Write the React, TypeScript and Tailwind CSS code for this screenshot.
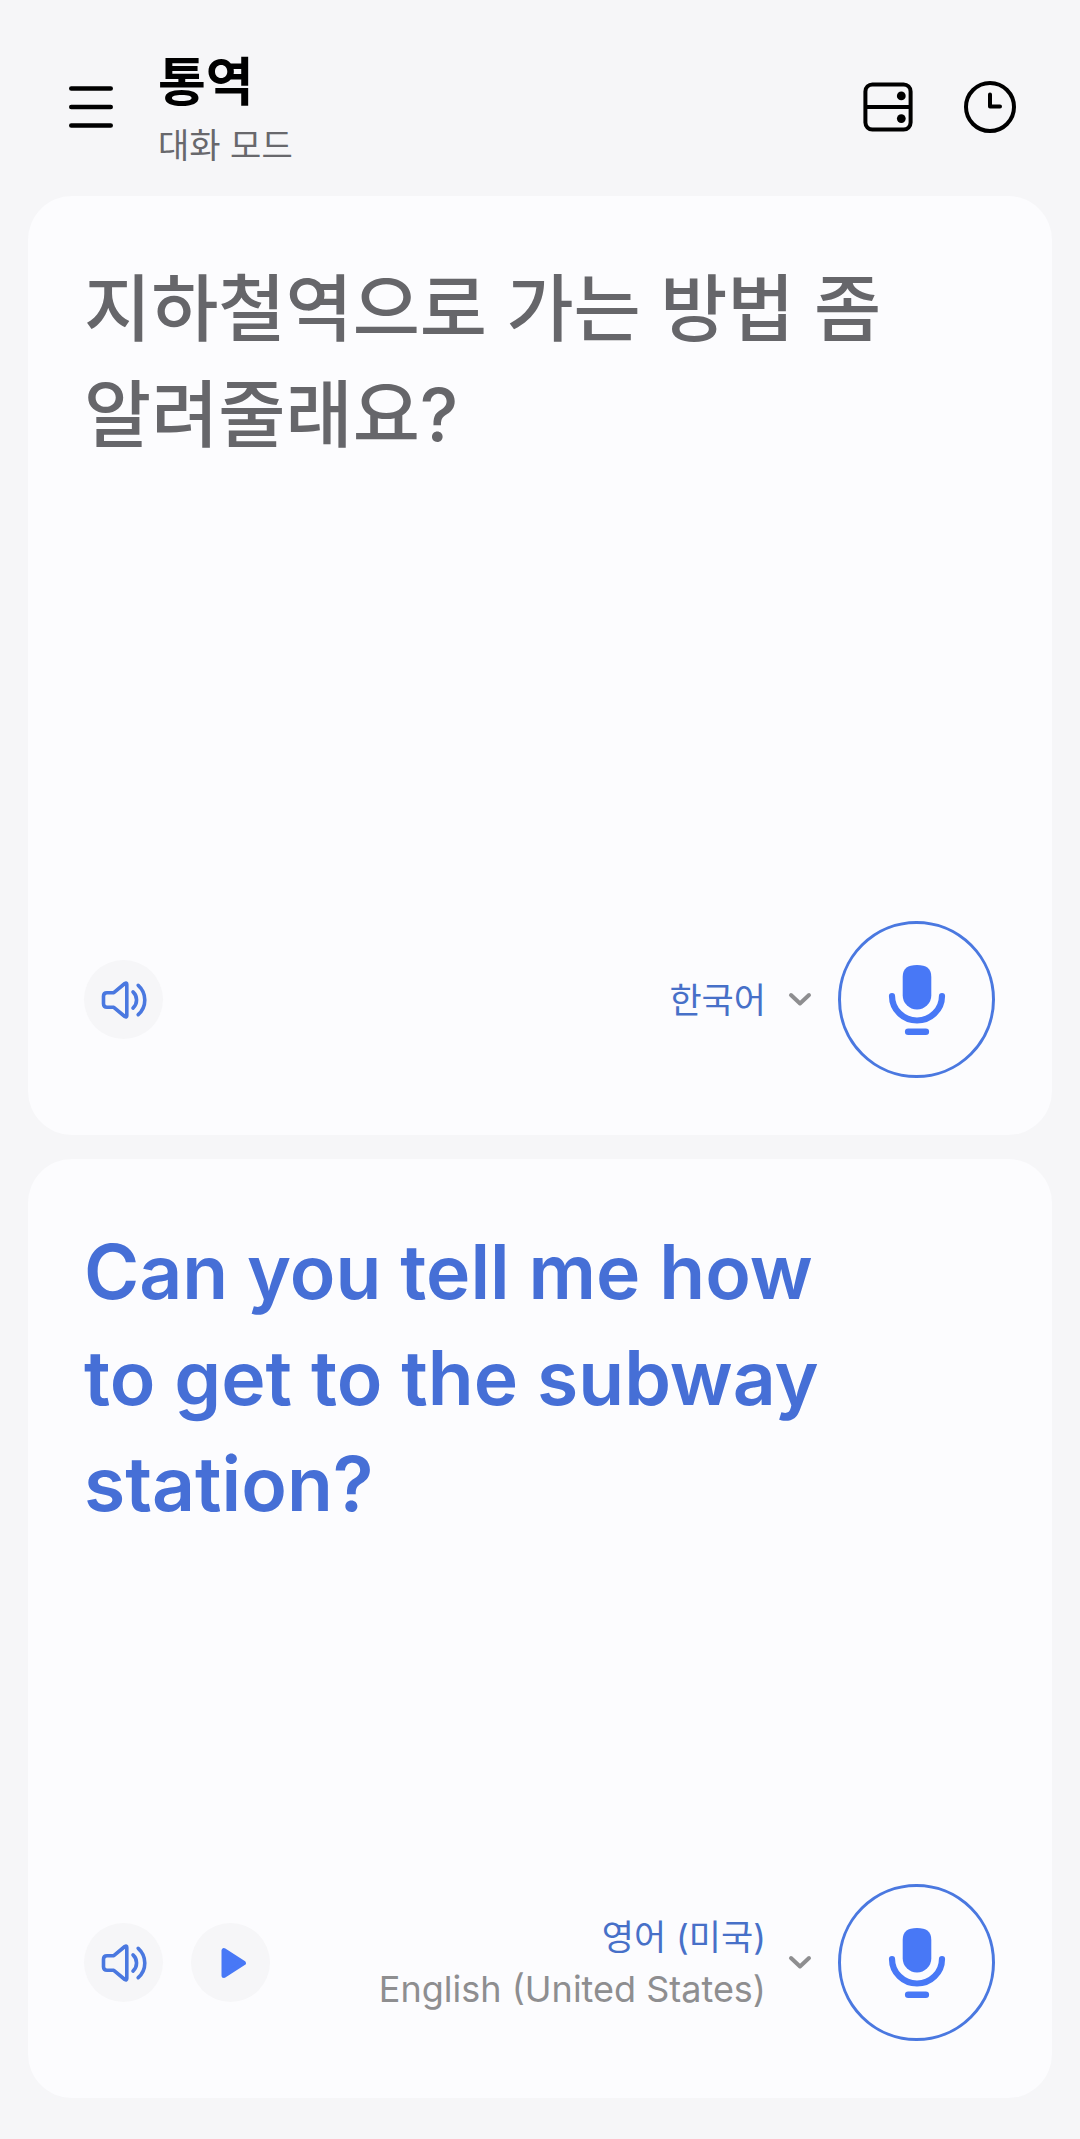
import type { ReactNode } from "react";

const BLUE = "#4878f6";
const BLUE_LINE = "#4a78e0";

function MenuIcon() {
  return (
    <svg width="48" height="48" viewBox="0 0 48 48" fill="none" stroke="#000" strokeWidth="4.6" strokeLinecap="round" aria-hidden="true">
      <path d="M3.3 5.5H42.7M3.3 24H42.7M3.3 42.5H42.7" />
    </svg>
  );
}

function SplitViewIcon() {
  return (
    <svg width="56" height="56" viewBox="0 0 56 56" fill="none" stroke="#000" strokeWidth="4" aria-hidden="true">
      <rect x="5.4" y="5.4" width="45.2" height="45.2" rx="7" />
      <path d="M5.4 28H50.6" />
      <circle cx="41.3" cy="16.9" r="4.4" fill="#000" stroke="none" />
      <circle cx="41.3" cy="39.6" r="4.4" fill="#000" stroke="none" />
    </svg>
  );
}

function HistoryIcon() {
  return (
    <svg width="56" height="56" viewBox="0 0 56 56" fill="none" stroke="#000" strokeWidth="4" strokeLinecap="round" strokeLinejoin="round" aria-hidden="true">
      <circle cx="28" cy="28" r="24" />
      <path d="M28 15.5V27.6H38" />
    </svg>
  );
}

function SpeakerIcon() {
  return (
    <svg width="48" height="40" viewBox="0 0 48 40" fill="none" stroke={BLUE_LINE} strokeWidth="3.6" strokeLinecap="round" strokeLinejoin="round" aria-hidden="true">
      <path d="M3.5 16.2Q3.5 12.7 7 12.7H13.8L24.8 3.5Q26.8 2.4 26.8 4.4V35.6Q26.8 37.6 24.8 36.5L13.8 27.3H7Q3.5 27.3 3.5 23.8Z" />
      <path d="M33 11.9A11 11 0 0 1 33 28.1" />
      <path d="M38.2 5.3A19.7 19.7 0 0 1 38.2 34.7" />
    </svg>
  );
}

function PlayIcon() {
  return (
    <svg width="32" height="32" viewBox="0 0 32 32" fill={BLUE} stroke={BLUE} strokeWidth="5" strokeLinejoin="round" aria-hidden="true">
      <path d="M9 3.6V28.4L28.4 16Z" />
    </svg>
  );
}

function MicIcon() {
  return (
    <svg width="60" height="72" viewBox="0 0 60 72" fill="none" aria-hidden="true">
      <path d="M15.7 13C15.7 4.5 20.5 1 30 1S44.3 4.5 44.3 13V31.2A14.3 14.3 0 0 1 15.7 31.2Z" fill={BLUE} />
      <path d="M5 32A25 24.5 0 0 0 55 32" stroke={BLUE} strokeWidth="6.2" strokeLinecap="round" />
      <path d="M21.2 67.7H38.8" stroke={BLUE} strokeWidth="6.6" strokeLinecap="round" />
    </svg>
  );
}

function ChevronIcon() {
  return (
    <svg className="shrink-0" width="24" height="16" viewBox="0 0 24 16" fill="none" stroke="#8e8e90" strokeWidth="4" strokeLinecap="round" strokeLinejoin="round" aria-hidden="true">
      <path d="M3 3L12 11.5L21 3" />
    </svg>
  );
}

function RoundButton({ label, children }: { label: string; children: ReactNode }) {
  return (
    <button type="button" aria-label={label} className="flex size-[79px] items-center justify-center rounded-full bg-[#f6f6f8]">
      {children}
    </button>
  );
}

type PanelProps = {
  id: string;
  text: ReactNode;
  language: string;
  otherLanguage: string;
  nativeName?: string;
  canPlay?: boolean;
};

function Panel({ id, text, language, otherLanguage, nativeName, canPlay }: PanelProps) {
  return (
    <section className="flex flex-col justify-between rounded-[44px] bg-[#fcfcfe] pt-15 pr-[57px] pb-[57px] pl-14">
      {text}
      <div className="flex items-center justify-between">
        <div className="flex gap-7">
          <RoundButton label="듣기">
            <SpeakerIcon />
          </RoundButton>
          {canPlay && (
            <RoundButton label="재생">
              <PlayIcon />
            </RoundButton>
          )}
        </div>
        <div className="flex items-center gap-[26px]">
          <label htmlFor={id} className="flex items-center gap-[22px]">
            <span className="flex flex-col items-end">
              <select
                id={id}
                aria-label="언어"
                defaultValue={language}
                className="appearance-none bg-transparent text-right text-[35px] leading-[52px] text-[#4770c8] [field-sizing:content] [text-align-last:right]"
              >
                <option>{language}</option>
                <option>{otherLanguage}</option>
              </select>
              {nativeName && <span className="text-[36px] leading-[52px] text-[#8e8e90]">{nativeName}</span>}
            </span>
            <ChevronIcon />
          </label>
          <button type="button" aria-label="말하기" className="flex size-[157px] items-center justify-center rounded-full border-[3px] border-[#4a78e0]">
            <MicIcon />
          </button>
        </div>
      </div>
    </section>
  );
}

export default function App() {
  return (
    <div className="flex min-h-screen flex-col bg-[#f6f6f8] px-7 pb-[41px] font-['Inter','Noto_Sans_CJK_KR',sans-serif]">
      <header className="flex h-[196px] items-center justify-between pt-[18px] pr-[34px] pl-10">
        <div className="flex items-center gap-[42px]">
          <button type="button" aria-label="메뉴">
            <MenuIcon />
          </button>
          <div className="pt-2">
            <h1 className="text-[52px] leading-[70px] font-bold text-black">통역</h1>
            <p className="text-[34px] leading-[56px] text-[#68686c]">대화 모드</p>
          </div>
        </div>
        <div className="flex items-center gap-[46px]">
          <button type="button" aria-label="화면 분할">
            <SplitViewIcon />
          </button>
          <button type="button" aria-label="기록">
            <HistoryIcon />
          </button>
        </div>
      </header>
      <main className="grid flex-1 auto-rows-fr gap-6">
        <Panel
          id="source-language"
          text={<p className="pr-24 text-[73px] leading-[106px] font-medium break-keep text-[#66666a]">지하철역으로 가는 방법 좀 알려줄래요?</p>}
          language="한국어"
          otherLanguage="영어 (미국)"
        />
        <Panel
          id="target-language"
          text={<p lang="en" className="pr-24 text-[75px] leading-[106px] font-semibold text-[#466fd6]">Can you tell me how to get to the subway station?</p>}
          language="영어 (미국)"
          otherLanguage="한국어"
          nativeName="English (United States)"
          canPlay
        />
      </main>
    </div>
  );
}
